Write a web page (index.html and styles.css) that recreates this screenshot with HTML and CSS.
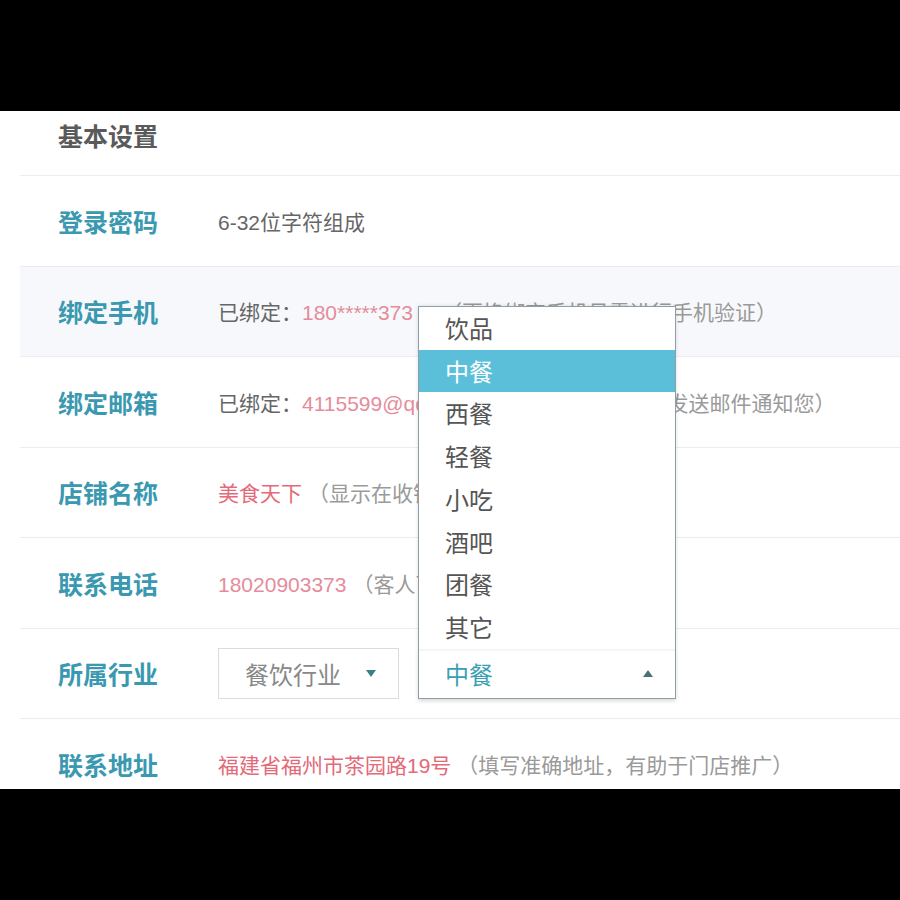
FILE: index.html
```html
<!DOCTYPE html>
<html lang="zh-CN">
<head>
<meta charset="utf-8">
<title>基本设置</title>
<link rel="stylesheet" href="styles.css">
</head>
<body>
<div class="screen">
  <div class="panel">
    <div class="title">基本设置</div>
    <div class="row">
      <div class="label">登录密码</div>
      <div class="value">6-32位字符组成</div>
    </div>
    <div class="row row-alt">
      <div class="label">绑定手机</div>
      <div class="value">已绑定：<span class="pink">180*****373</span><span class="hint hint-wide">（更换绑定手机号需进行手机验证）</span></div>
    </div>
    <div class="row">
      <div class="label">绑定邮箱</div>
      <div class="value">已绑定：<span class="pink">4115599@qq.com</span><span class="hint">（有新订单时系统将发送邮件通知您）</span></div>
    </div>
    <div class="row">
      <div class="label">店铺名称</div>
      <div class="value"><span class="red">美食天下</span><span class="hint">（显示在收银小票上）</span></div>
    </div>
    <div class="row">
      <div class="label">联系电话</div>
      <div class="value"><span class="pink">18020903373</span><span class="hint">（客人可通过此电话联系您）</span></div>
    </div>
    <div class="row">
      <div class="label">所属行业</div>
      <div class="selects">
        <div class="select select-closed">
          <span>餐饮行业</span>
          <svg class="caret" width="10" height="7" viewBox="0 0 10 7"><path d="M0 0H10L5 7Z" fill="#3d7e8b"/></svg>
        </div>
        <div class="select select-open">
          <span>中餐</span>
          <svg class="caret" width="10" height="7" viewBox="0 0 10 7"><path d="M0 7H10L5 0Z" fill="#4d6f78"/></svg>
          <ul class="menu">
            <li>饮品</li>
            <li class="active">中餐</li>
            <li>西餐</li>
            <li>轻餐</li>
            <li>小吃</li>
            <li>酒吧</li>
            <li>团餐</li>
            <li>其它</li>
          </ul>
        </div>
      </div>
    </div>
    <div class="row">
      <div class="label">联系地址</div>
      <div class="value"><span class="red">福建省福州市茶园路19号</span><span class="hint">（填写准确地址，有助于门店推广）</span></div>
    </div>
  </div>
</div>
</body>
</html>
```
FILE: styles.css
```css
html, body {
  margin: 0;
  padding: 0;
  background: #000;
}
body {
  font-family: "Liberation Sans", "Noto Sans CJK SC", sans-serif;
}
.screen {
  height: 900px;
  padding-top: 111px;
  box-sizing: border-box;
}
.panel {
  height: 678px;
  background: #fff;
  overflow: hidden;
}
.title {
  height: 64px;
  box-sizing: border-box;
  padding: 10px 0 0 58px;
  line-height: 28px;
  font-size: 25px;
  font-weight: bold;
  color: #5a5a5a;
  font-family: "Noto Sans CJK SC", sans-serif;
}
.row {
  height: 90.5px;
  box-sizing: border-box;
  margin-left: 20px;
  border-top: 1px solid #ececef;
  display: flex;
  align-items: center;
  padding-left: 38px;
  white-space: nowrap;
}
.row-alt {
  background: #f7f8fb;
}
.label {
  width: 160px;
  flex: none;
  font-size: 25px;
  font-weight: bold;
  color: #3a99b0;
  font-family: "Noto Sans CJK SC", sans-serif;
}
.value {
  font-size: 21px;
  color: #666;
}
.pink {
  color: #e58c9b;
}
.red {
  color: #e36a78;
}
.hint {
  color: #9a9a9a;
  margin-left: 6px;
}
.hint-wide {
  margin-left: 28px;
}
.selects {
  display: flex;
  gap: 19px;
  align-items: center;
}
.select {
  position: relative;
  height: 51px;
  box-sizing: border-box;
  display: flex;
  align-items: center;
  justify-content: space-between;
  padding: 0 22px 0 26px;
  font-size: 24px;
  font-family: "Noto Sans CJK SC", sans-serif;
}
.select-closed {
  width: 181px;
  border: 1px solid #dcdcdc;
  color: #888;
}
.select-open {
  width: 258px;
  border: 1px solid #8e9ea4;
  color: #3a9fb5;
  box-shadow: 0 2px 4px rgba(0, 0, 0, 0.15);
}
.menu {
  position: absolute;
  left: -1px;
  right: -1px;
  bottom: 100%;
  margin: 0;
  padding: 0;
  list-style: none;
  background: #fff;
  border: 1px solid #8e9ea4;
  border-bottom: none;
  box-shadow: 0 0 4px rgba(0, 0, 0, 0.12);
}
.menu li {
  height: 42.75px;
  line-height: 42px;
  padding-left: 26px;
  font-size: 24px;
  color: #555;
}
.menu li.active {
  background: #5bbfda;
  color: #fff;
}
```
